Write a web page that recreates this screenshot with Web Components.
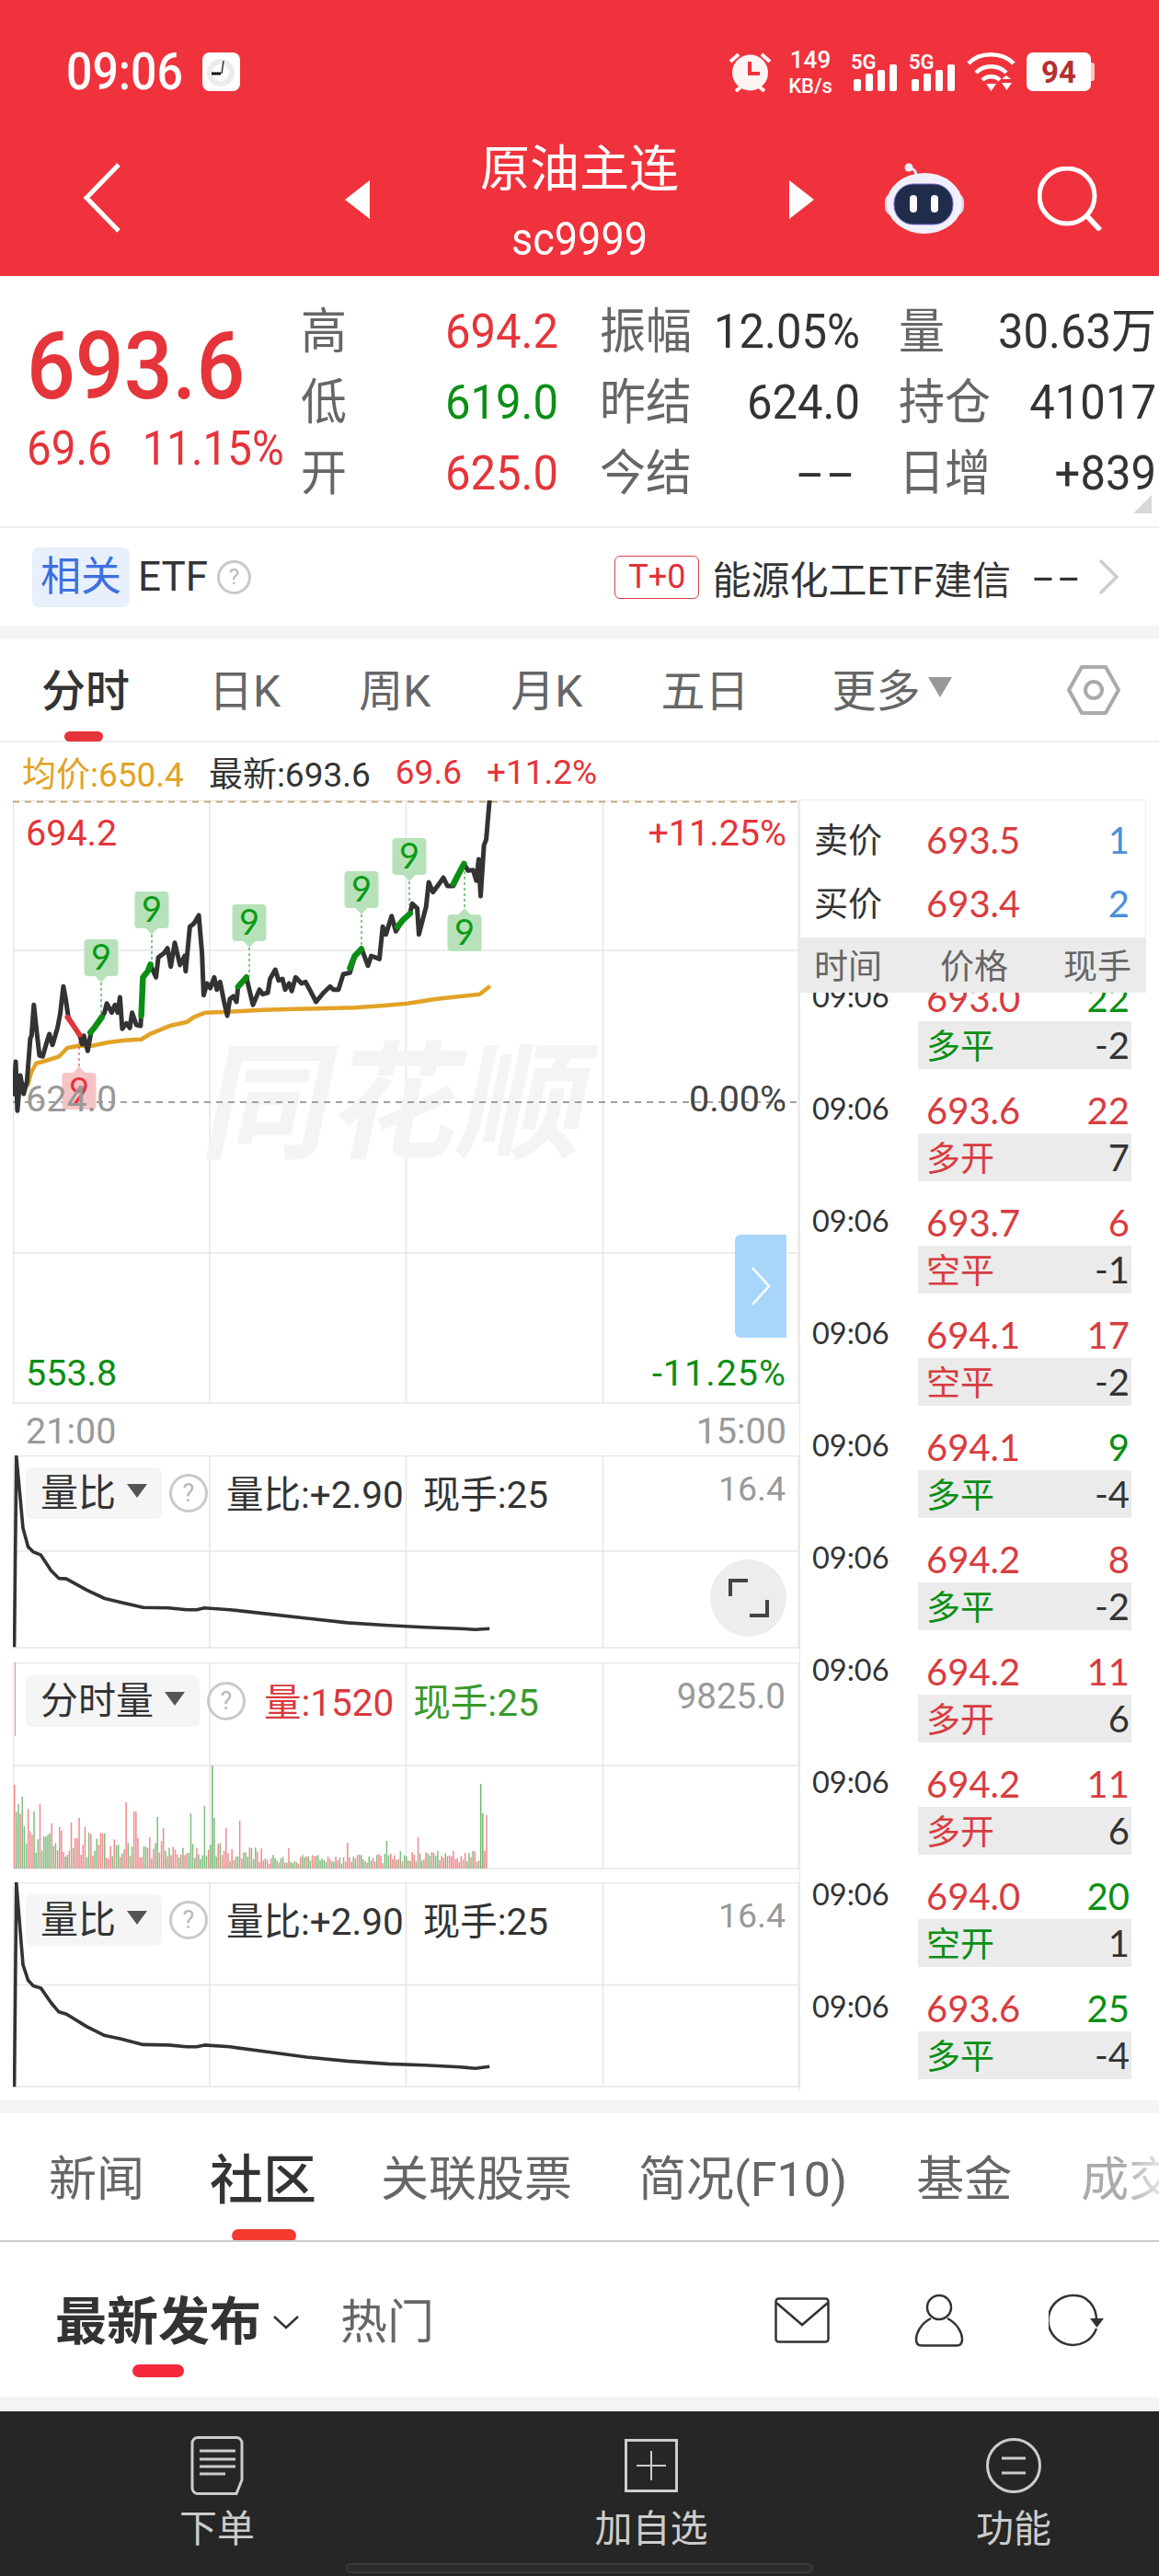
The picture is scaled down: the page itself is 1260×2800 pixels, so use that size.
<!DOCTYPE html>
<html lang="zh-CN"><head><meta charset="utf-8"><title>原油主连</title>
<style>
html,body{margin:0;padding:0;background:#fff}
body{width:1260px;height:2800px;overflow:hidden;font-family:Roboto,"Noto Sans CJK SC",sans-serif;color:#333}
</style></head><body>
<red-header></red-header>
<quote-panel></quote-panel>
<etf-row></etf-row>
<gray-sep h="14"></gray-sep>
<period-tabs></period-tabs>
<price-legend></price-legend>
<chart-area>
  <chart-column>
    <price-chart></price-chart>
    <time-axis></time-axis>
    <ratio-chart h="210" gap="0" variant="a"></ratio-chart>
    <volume-chart></volume-chart>
    <ratio-chart h="223" gap="14" variant="b"></ratio-chart>
  </chart-column>
  <trade-list>
    <trade-row p="693.0" q="22" qc="g" k="多平" kc="g" d="-2"></trade-row>
    <trade-row p="693.6" q="22" qc="r" k="多开" kc="r" d="7"></trade-row>
    <trade-row p="693.7" q="6" qc="r" k="空平" kc="r" d="-1"></trade-row>
    <trade-row p="694.1" q="17" qc="r" k="空平" kc="r" d="-2"></trade-row>
    <trade-row p="694.1" q="9" qc="g" k="多平" kc="g" d="-4"></trade-row>
    <trade-row p="694.2" q="8" qc="r" k="多平" kc="g" d="-2"></trade-row>
    <trade-row p="694.2" q="11" qc="r" k="多开" kc="r" d="6"></trade-row>
    <trade-row p="694.2" q="11" qc="r" k="多开" kc="r" d="6"></trade-row>
    <trade-row p="694.0" q="20" qc="g" k="空开" kc="g" d="1"></trade-row>
    <trade-row p="693.6" q="25" qc="g" k="多平" kc="g" d="-4"></trade-row>
  </trade-list>
</chart-area>
<gray-sep h="14"></gray-sep>
<news-tabs></news-tabs>
<feed-bar></feed-bar>
<gray-sep h="16"></gray-sep>
<bottom-nav></bottom-nav>
<script>
const RED='#e5343a',GREEN='#0a8f14',GRID='#e6e6e6';
const el=(name,css,render)=>customElements.define(name,class extends HTMLElement{
  connectedCallback(){ if(this.shadowRoot) return;
    const s=this.attachShadow({mode:'open'});
    s.innerHTML=`<style>${css}</style>`+render(this);}
});
const pts=(a,fx,fy)=>a.map(p=>fx(p[0]).toFixed(1)+','+fy(p[1]).toFixed(1)).join(' ');

el('gray-sep',':host{display:block;background:#f4f4f4}',h=>{h.style.height=h.getAttribute('h')+'px';return ''});

el('help-dot',`:host{display:inline-flex;align-items:center;justify-content:center;box-sizing:border-box;
  width:var(--s,42px);height:var(--s,42px);border:3px solid #c9c9c9;border-radius:50%;color:#b8b8b8;font-size:27px;line-height:1;flex:none}`,()=>'?');

el('red-header',`
:host{display:block;height:300px;background:#f0323c;color:#fff;overflow:hidden}
.st{height:156px;display:flex;align-items:center;padding:0 70px 0 72px;box-sizing:border-box}
.time{font-size:50px;font-weight:500;width:148px;line-height:1;transform:scaleY(1.1)}
.right{margin-left:auto;display:flex;align-items:center}
.speed{display:flex;flex-direction:column;align-items:center;width:52px;margin:0 18px 0 16px;line-height:1;font-weight:500}
.speed b{font-size:26px;font-weight:500;margin-bottom:5px}.speed i{font-style:normal;font-size:22px}
svg{display:block}
.bat{width:70px;height:42px;background:#fff;border-radius:7px;color:#b52f33;font-size:33px;font-weight:700;display:flex;align-items:center;justify-content:center;line-height:1}
.tip{width:4px;height:20px;background:#ffc5c8;border-radius:0 3px 3px 0}
.nav{height:120px;display:grid;grid-template-columns:1fr 510px 1fr;grid-template-rows:120px;align-items:center}
.l{padding-left:90px;margin-top:-2px}
.mid{display:flex;align-items:center;justify-content:space-between;height:120px}
.tt{display:flex;flex-direction:column;align-items:center;margin-top:10px;height:128px}
.t1{font-size:54px;line-height:60px;margin-top:-2px}.t2{font-size:45px;line-height:50px;margin-top:20px;transform:scaleY(1.12)}
.r{display:flex;justify-content:flex-end;align-items:center;padding-right:62px;gap:80px}
.tri{margin-top:2px}
`,()=>`
<div class="st"><span class="time">09:06</span>
<svg width="41" height="42" viewBox="0 0 41 42"><rect width="41" height="42" rx="8" fill="#fff"/><circle cx="20" cy="22" r="15" fill="#ececec"/><circle cx="20" cy="22" r="9" fill="#fff"/><path d="M10 23h10" stroke="#111" stroke-width="3"/><path d="M23 9l-2 14" stroke="#333" stroke-width="1.5"/></svg>
<div class="right">
<svg width="47" height="46" viewBox="0 0 47 46"><circle cx="23.5" cy="24" r="19.5" fill="#fff4f4"/><path d="M2 12l9-8M45 12l-9-8M8 44l6-5M39 44l-6-5" stroke="#fff4f4" stroke-width="4" fill="none"/><path d="M23 12v13h11" stroke="#f0323c" stroke-width="4" fill="none"/></svg>
<div class="speed"><b>149</b><i>KB/s</i></div>
<svg width="52" height="44" viewBox="0 0 52 44"><text x="0" y="19" font-size="22" font-weight="600" fill="#fff" font-family="Roboto">5G</text><g fill="#fff"><rect x="3" y="30" width="8" height="13" rx="2"/><rect x="16" y="24" width="8" height="19" rx="2"/><rect x="29" y="20" width="8" height="23" rx="2"/><rect x="42" y="14" width="8" height="29" rx="2"/></g></svg>
<svg width="52" height="44" viewBox="0 0 52 44" style="margin-left:11px"><text x="0" y="19" font-size="22" font-weight="600" fill="#fff" font-family="Roboto">5G</text><g fill="#fff"><rect x="3" y="30" width="8" height="13" rx="2"/><rect x="16" y="24" width="8" height="19" rx="2"/><rect x="29" y="20" width="8" height="23" rx="2"/><rect x="42" y="14" width="8" height="29" rx="2"/></g></svg>
<svg width="54" height="44" viewBox="0 0 54 44" style="margin-left:11px"><g fill="none" stroke="#fff" stroke-width="4.5"><path d="M2 13C14 0 38 0 51 13"/><path d="M10 23c9-9 24-9 33 0"/><path d="M17 31c5-5 14-5 19 0"/></g><path d="M21 35h11l-5.500 8z" fill="#fff"/><path d="M38 30l5-4 5 4zM38 34h11l-5.500 8z" fill="#fff"/></svg>
<div class="bat" style="margin-left:11px">94</div><div class="tip"></div>
</div></div>
<div class="nav">
<div class="l"><svg width="42" height="76" viewBox="0 0 42 76"><path d="M39 2L4 38l35 36" fill="none" stroke="#fff" stroke-width="5"/></svg></div>
<div class="mid">
<svg class="tri" width="28" height="42" viewBox="0 0 28 42"><path d="M27 0v42L0 21z" fill="#fff"/></svg>
<div class="tt"><div class="t1">原油主连</div><div class="t2">sc9999</div></div>
<svg class="tri" width="28" height="42" viewBox="0 0 28 42"><path d="M1 0v42l27-21z" fill="#fff"/></svg>
</div>
<div class="r">
<svg width="86" height="78" viewBox="0 0 86 78"><path d="M34 14c0-5-3-8-7-8" fill="none" stroke="#e8e6f6" stroke-width="3"/><circle cx="26" cy="5" r="4.500" fill="#eeeef8"/><rect x="0" y="32" width="86" height="26" rx="10" fill="#d8d6ee"/><ellipse cx="43" cy="44" rx="41" ry="33" fill="#f1f0fa"/><rect x="10" y="23" width="64" height="44" rx="21" fill="#1f2d4b" stroke="#7d6bd8" stroke-width="1"/><rect x="27" y="35" width="8" height="19" rx="4" fill="#fff"/><rect x="50" y="35" width="8" height="19" rx="4" fill="#fff"/></svg>
<svg width="70" height="70" viewBox="0 0 70 70"><circle cx="32" cy="32" r="30" fill="none" stroke="#fff" stroke-width="5"/><path d="M54 54l14 15" stroke="#fff" stroke-width="5.500"/></svg>
</div></div>`);

el('quote-panel',`
:host{display:flex;height:274px;box-sizing:border-box;border-bottom:2px solid #eee;position:relative;overflow:hidden}
.left{width:327px;flex:none;padding:50px 0 0 29px;box-sizing:border-box;color:${RED}}
.big{font-size:93px;line-height:98px;font-weight:500;transform:scaleY(1.1);transform-origin:left center}
.sub{font-size:47.500px;line-height:50px;margin-top:15px;display:flex;gap:33px;white-space:nowrap;transform:scaleY(1.08);transform-origin:left center}
.g{display:grid;grid-template-columns:60px 220px 145px 183px 142px 180px;grid-auto-rows:77px;padding-top:22px;align-items:center;font-size:49px}
.g>*{transform:scaleY(1.06)}
.lb{color:#666;font-size:50px;line-height:1;white-space:nowrap}
.lp{padding-left:45px}.lq{padding-left:42px}
.v{text-align:right;color:#333;white-space:nowrap;line-height:1}
.g .d{transform:scale(2,1.06);transform-origin:right center;letter-spacing:3px;padding-right:1px}
.r{color:${RED}}.gr{color:${GREEN}}
.corner{position:absolute;right:8px;bottom:14px}
`,()=>`
<div class="left"><div class="big">693.6</div><div class="sub"><span>69.6</span><span>11.15%</span></div></div>
<div class="g">
<span class="lb">高</span><span class="v r">694.2</span><span class="lb lp">振幅</span><span class="v">12.05%</span><span class="lb lq">量</span><span class="v">30.63万</span>
<span class="lb">低</span><span class="v gr">619.0</span><span class="lb lp">昨结</span><span class="v">624.0</span><span class="lb lq">持仓</span><span class="v">41017</span>
<span class="lb">开</span><span class="v r">625.0</span><span class="lb lp">今结</span><span class="v d">--</span><span class="lb lq">日增</span><span class="v">+839</span>
</div>
<svg class="corner" width="20" height="20" viewBox="0 0 20 20"><path d="M20 0v20H0z" fill="#d8d8d8"/></svg>`);

el('etf-row',`
:host{display:flex;align-items:center;height:106px;font-size:42px;color:#333;padding:0 43px 0 35px;box-sizing:border-box}
.tag{width:106px;height:65px;background:#e8f0fd;border-radius:7px;color:#3d6fe0;font-size:44px;display:flex;align-items:center;justify-content:center;line-height:1}
.etf{margin:0 10px 0 9px;font-size:44px}
help-dot{--s:37px;font-size:24px}
.r{margin-left:auto;display:flex;align-items:center}
.t0{box-sizing:border-box;width:92px;height:47px;border:1.5px solid #d9414a;border-radius:6px;color:#e0303a;font-size:36px;display:flex;align-items:center;justify-content:center;margin-right:14px}
.dash{margin-left:24px;width:48px;letter-spacing:3px;display:inline-block;transform:scaleX(1.9);transform-origin:left center}
svg{margin-left:22px}
`,()=>`<div class="tag">相关</div><span class="etf">ETF</span><help-dot></help-dot>
<div class="r"><div class="t0">T+0</div><span>能源化工ETF建信</span><span class="dash">--</span>
<svg width="24" height="40" viewBox="0 0 24 40"><path d="M3 2l18 18L3 38" fill="none" stroke="#ccc" stroke-width="3.500"/></svg></div>`);

el('period-tabs',`
:host{display:flex;align-items:center;height:113px;box-sizing:border-box;border-bottom:2px solid #eee;font-size:48px;color:#666;position:relative;padding-top:4px}
span{white-space:nowrap;line-height:1}
.a{margin-left:45px;color:#333;font-weight:500;position:relative}
.a::after{content:"";position:absolute;left:25px;width:42px;height:11px;top:67px;background:${RED};border-radius:6px}
.tri{width:0;height:0;border:13px solid transparent;border-top:22px solid #999;border-bottom:0;margin:-10px 0 0 9px}
svg{margin-left:125px;margin-top:-4px}
`,()=>`<span class="a">分时</span><span style="margin-left:86px">日K</span><span style="margin-left:85px">周K</span><span style="margin-left:87px">月K</span><span style="margin-left:85px">五日</span><span style="margin-left:90px">更多</span><i class="tri"></i>
<svg width="58" height="54" viewBox="0 0 58 54"><path d="M16 2h26l14 25-14 25H16L2 27z" fill="none" stroke="#aaa" stroke-width="4" stroke-linejoin="round"/><circle cx="29" cy="27" r="9" fill="none" stroke="#aaa" stroke-width="4"/></svg>`);

el('price-legend',`
:host{display:flex;align-items:center;height:62px;font-size:37px;padding-left:24px;white-space:nowrap;color:#333;box-sizing:border-box;padding-top:2px}
.o{color:#e2a225}.r{color:${RED}}
span{margin-right:27px}
`,()=>`<span class="o">均价:650.4</span><span>最新:693.6</span><span class="r">69.6</span><span class="r">+11.2%</span>`);

el('chart-area',':host{display:flex;height:1414px;overflow:hidden}',()=>'<slot></slot>');
el('chart-column',':host{display:block;width:855px;margin-left:14px;flex:none;padding-top:1px}',()=>'<slot></slot>');

const gridSvg=(w,h,ys)=>{
  const xs=[214,427.5,641.5];
  return `<line x1="0" y1="0.5" x2="${w}" y2="0.5"/><line x1="0" y1="${h-1}" x2="${w}" y2="${h-1}"/><line x1="0.5" y1="0" x2="0.5" y2="${h}"/><line x1="${w-1}" y1="0" x2="${w-1}" y2="${h}"/>`+
    xs.map(x=>`<line x1="${x}" y1="0" x2="${x}" y2="${h}"/>`).join('')+ys.map(y=>`<line x1="0" y1="${y}" x2="${w}" y2="${y}"/>`).join('');
};

el('price-chart',`
:host{display:block;position:relative;height:656px;width:855px;overflow:hidden}
svg{position:absolute;left:0;top:0;overflow:hidden}
.wm{position:absolute;left:212px;top:262px;font-size:138px;line-height:1;font-weight:700;color:#f4f4f4;transform:skewX(-12deg);white-space:nowrap;letter-spacing:1px}
.lb{position:absolute;font-size:39.500px;line-height:44px;white-space:nowrap}
.btn{position:absolute;left:785px;top:472px;width:56px;height:112px;background:#a8d6fb;border-radius:6px 0 0 6px;display:flex;align-items:center;justify-content:center}
.btn svg{position:static}
`,()=>{
 const zx=x=>x/2.8-14, zy=y=>860+y/3-871;
 const price=[[42,990],[48,885],[53,1045],[62,930],[72,990],[82,950],[92,810],[96,800],[103,700],[112,790],[120,865],[130,868],[140,830],[150,795],[160,830],[175,775],[183,730],[193,640],[200,680],[208,740],[225,770],[243,800],[250,828],[255,800],[267,850],[277,790],[290,770],[305,745],[318,725],[325,695],[340,725],[350,700],[358,725],[365,675],[372,778],[385,760],[395,775],[402,725],[415,765],[428,768],[435,610],[450,590],[458,570],[475,610],[482,545],[500,530],[510,515],[520,575],[532,497],[548,570],[562,540],[565,590],[578,445],[590,435],[605,408],[615,530],[620,668],[630,630],[640,645],[652,610],[660,650],[670,625],[682,690],[692,735],[700,680],[710,672],[720,690],[725,640],[750,610],[770,700],[790,650],[800,665],[815,660],[822,615],[838,585],[848,620],[860,615],[868,650],[880,630],[888,655],[900,610],[918,630],[930,625],[945,655],[962,690],[985,660],[1005,640],[1015,650],[1030,650],[1045,600],[1065,595],[1080,540],[1100,515],[1120,572],[1130,540],[1155,550],[1165,445],[1175,470],[1192,410],[1205,460],[1225,425],[1248,402],[1255,370],[1270,385],[1275,470],[1297,380],[1305,300],[1318,332],[1340,300],[1350,285],[1362,312],[1380,312],[1412,240],[1425,262],[1440,260],[1450,295],[1457,225],[1463,345],[1473,180],[1480,160],[1490,35]];
 const avg=[[85,960],[95,920],[110,890],[130,885],[180,868],[205,840],[240,833],[280,833],[330,822],[380,815],[430,812],[460,793],[520,767],[570,755],[590,740],[625,725],[700,722],[800,716],[900,713],[1000,711],[1080,709],[1160,703],[1240,695],[1330,680],[1460,665],[1488,642]];
 const greens=[[[275,790],[290,770],[310,740]],[[430,735],[435,610],[450,590],[458,568]],[[725,640],[750,610]],[[1065,580],[1080,540],[1100,518]],[[1210,445],[1225,425],[1248,402]],[[1380,305],[1412,240]]];
 const red=[[205,740],[225,770],[243,798]];
 const pl=(a,c,w)=>`<polyline points="${pts(a,zx,zy)}" fill="none" stroke="${c}" stroke-width="${w}" stroke-linejoin="round" stroke-linecap="round"/>`;
 const badge=(cx,top,to,up,c,f)=>{
   const X=cx-14,Y=top-871,b=Y+40;
   const box=up
    ?`<path d="M${X-18.5} ${Y+4}q0-4 4-4h8l6.500-7 6.500 7h8q4 0 4 4v32q0 4-4 4h-29q-4 0-4-4z" fill="${f}"/><line x1="${X}" y1="${to-871}" x2="${X}" y2="${Y-7}" stroke="${c}" stroke-dasharray="3 3" stroke-width="1.500" opacity=".7"/>`
    :`<path d="M${X-18.5} ${Y+4}q0-4 4-4h29q4 0 4 4v32q0 4-4 4h-8l-6.500 7-6.500-7h-8q-4 0-4-4z" fill="${f}"/><line x1="${X}" y1="${b+7}" x2="${X}" y2="${to-871}" stroke="${c}" stroke-dasharray="3 3" stroke-width="1.500" opacity=".7"/>`;
   return box+`<text x="${X}" y="${Y+33}" text-anchor="middle" font-size="38" font-family="Lato,Roboto" fill="${c}">9</text>`;
 };
 const gf='#b7e2b9',gc='#0a9a14';
 return `<svg width="855" height="656" viewBox="0 0 855 656"><g stroke="${GRID}" stroke-width="1.500">${gridSvg(855,656,[163,492])}</g></svg>
 <div class="wm">同花顺</div>
 <svg width="855" height="656" viewBox="0 0 855 656">
 <line x1="0" y1="1.500" x2="855" y2="1.500" stroke="#c8a97e" stroke-width="2" stroke-dasharray="7 6"/>
 <line x1="0" y1="328" x2="855" y2="328" stroke="#a0a0a0" stroke-width="2" stroke-dasharray="7 6"/>
 ${pl(avg,'#e2a225',4.5)}
 ${badge(86,1167,1127,true,'#e5343a','#f7c4c6')}
 ${pl(price,'#333',5)}
 ${greens.map(g=>pl(g,GREEN,6.5)).join('')}${pl(red,RED,5.5)}
 ${badge(110,1022,1102,false,gc,gf)}${badge(165,970,1050,false,gc,gf)}${badge(271,984,1062,false,gc,gf)}${badge(393,948,1032,false,gc,gf)}${badge(445,912,985,false,gc,gf)}${badge(505,995,948,true,gc,gf)}
 </svg>
 <span class="lb" style="left:14px;top:14px;color:${RED}">694.2</span>
 <span class="lb" style="right:14px;top:14px;color:${RED}">+11.25%</span>
 <span class="lb" style="left:14px;top:303px;color:#999">624.0</span>
 <span class="lb" style="right:14px;top:303px;color:#444">0.00%</span>
 <span class="lb" style="left:14px;top:601px;color:${GREEN}">553.8</span>
 <span class="lb" style="right:14px;top:601px;color:${GREEN};letter-spacing:1px">-11.25%</span>
 <div class="btn"><svg width="24" height="44" viewBox="0 0 24 44"><path d="M3 2l18 20L3 42" fill="none" stroke="#fff" stroke-width="2.500"/></svg></div>`;
});

el('time-axis',`:host{display:flex;justify-content:space-between;align-items:center;height:56px;padding:2px 14px 0 14px;color:#999;font-size:39.500px;box-sizing:border-box}`,()=>`<span>21:00</span><span>15:00</span>`);

const headCss=`
.bar{position:relative;display:flex;align-items:flex-start;padding:13px 14px 0 14px;white-space:nowrap;font-size:40.500px;line-height:56px;color:#333}
.box{height:56px;background:#f5f5f5;border-radius:7px;display:flex;align-items:center;padding:0 16px;font-size:41px;box-sizing:border-box}
.box i{width:0;height:0;border:11px solid transparent;border-top:15px solid #555;border-bottom:0;margin:-6px 0 0 12px}
help-dot{margin:7px 0 0 8px}
.val{margin-left:auto;font-size:38.500px;color:#999;line-height:46px;margin-right:1px}
.t1{margin-left:20px;margin-top:2px}.t2{margin-left:21px;margin-top:2px}
svg.bg{position:absolute;left:0;top:0}
`;
el('ratio-chart',`
:host{display:block;position:relative;width:855px;overflow:hidden}
${headCss}
.val{font-size:37.500px}
.fs{position:absolute;left:758px;top:113px;width:83px;height:84px;border-radius:50%;background:#ededed;display:flex;align-items:center;justify-content:center}
`,h=>{
 const H=+h.getAttribute('h'),gap=+h.getAttribute('gap');
 h.style.height=H+'px'; h.style.marginTop=gap+'px';
 const v=h.getAttribute('variant');
 const a=v==='a'
 ?[[28,515],[32,90],[45,250],[55,292],[65,303],[80,310],[100,345],[115,362],[130,363],[170,388],[205,407],[235,415],[280,427],[330,428],[365,432],[385,432],[400,428],[450,432],[530,442],[600,451],[680,461],[760,467],[830,471],[900,474],[930,476],[958,474]]
 :[[28,1497],[32,1043],[45,1225],[55,1260],[65,1272],[80,1277],[100,1310],[115,1330],[130,1335],[170,1363],[205,1383],[235,1390],[280,1403],[330,1404],[365,1408],[385,1408],[400,1404],[450,1408],[530,1420],[600,1431],[680,1440],[760,1446],[830,1449],[900,1453],[930,1456],[958,1452]];
 const top=v==='a'?1583:2048;
 const P=pts(a,x=>x/1.8-14,y=>1540+y/2.05-top);
 const mid=v==='a'?104:111.5;
 return `<svg class="bg" width="855" height="${H}"><g stroke="${GRID}" stroke-width="1.500">${gridSvg(855,H,[mid])}</g><polyline points="${P}" fill="none" stroke="#333" stroke-width="3.600" stroke-linejoin="round"/></svg>
 <div class="bar"><div class="box">量比<i></i></div><help-dot></help-dot><span class="t1">量比:+2.90</span><span class="t2">现手:25</span><span class="val">16.4</span></div>
 ${v==='a'?`<div class="fs"><svg width="44" height="44" viewBox="0 0 44 44"><path d="M2 20V3h19M42 24v17H23" fill="none" stroke="#444" stroke-width="4"/></svg></div>`:''}`;
});

el('volume-chart',`
:host{display:block;position:relative;width:855px;height:225px;margin-top:15px;overflow:hidden}
${headCss}
.bar{padding-top:14px}
.r{color:#d9383e}.g{color:#3a9a2a}
`,()=>{
 let seed=17;const rnd=()=>{seed=(seed*16807)%2147483647;return seed/2147483647};
 const env=x=>x<20?60:x<55?48:x<100?34:x<160?30:x<225?28:x<270?20:x<370?13:x<420?15:x<510?17:45;
 const spikes={2:91,5:70,10:78,22:62,28:70,40:38,62:50,72:55,78:45,122:72,132:62,157:56,162:44,193:60,207:68,216:112,219:55,230:44,246:52,270:22,300:22,363:28,405:30,440:34,509:92,511:60,514:58,516:46,518:50};
 let r='';const h0=224;
 for(let i=0;i<242;i++){const x=1+i*2.13;
   let hh=env(x)*(.35+.8*rnd());
   for(const k in spikes){if(Math.abs(+k-x)<1.07) hh=spikes[k];}
   const c=rnd()<.55?'#ef8a8f':'#7fbe7f';
   const cc=(Math.abs(x-216)<1.1||Math.abs(x-509)<1.1)?'#6fb56f':(x>510?'#ef8a8f':c);
   r+=`<rect x="${x.toFixed(1)}" y="${(h0-hh).toFixed(1)}" width="1.500" height="${hh.toFixed(1)}" fill="${cc}"/>`;
 }
 r+=`<line x1="2.500" y1="0" x2="2.500" y2="80" stroke="#ef8a8f" stroke-width="1"/>`;
 return `<svg class="bg" width="855" height="225"><g stroke="${GRID}" stroke-width="1.500">${gridSvg(855,225,[112])}</g>${r}</svg>
 <div class="bar"><div class="box">分时量<i></i></div><help-dot></help-dot><span class="t1 r">量:1520</span><span class="t2 g">现手:25</span><span class="val">9825.0</span></div>`;
});

el('trade-list',`
:host{display:block;width:391px;flex:none;box-sizing:border-box;border-left:1.5px solid #e8e8e8;height:1404px;overflow:hidden;font-family:Lato,"Noto Sans CJK SC",sans-serif}
.top{height:150px;box-sizing:border-box;border-top:1.5px solid #eee;border-right:1.5px solid #eee;width:376px;padding-top:8px}
.q{display:grid;grid-template-columns:122px 1fr auto;align-items:center;height:69px;padding:0 17px 0 15px;font-size:40px;line-height:1;color:#d83c40}
.q span:first-child{color:#333;font-size:37px}.q span:last-child{color:#4a90d9}
.hd{height:60px;width:376px;background:#ebebeb;display:grid;grid-template-columns:137px 1fr auto;align-items:center;padding:0 16px 0 15px;box-sizing:border-box;font-size:37px;color:#666;line-height:1;position:relative;z-index:1}
.list{height:1194px;overflow:hidden}
.in{margin-top:-29px}
`,()=>`<div class="top"><div class="q"><span>卖价</span><span>693.5</span><span>1</span></div><div class="q"><span>买价</span><span>693.4</span><span>2</span></div></div>
<div class="hd"><span>时间</span><span>价格</span><span>现手</span></div>
<div class="list"><div class="in"><slot></slot></div></div>`);

el('trade-row',`
:host{display:grid;grid-template-columns:115px 232px;grid-template-rows:60px 52px;height:122px;padding-left:13px;font-size:40px;line-height:1;color:#333}
.t{grid-row:1/3;font-size:32.500px;padding-top:17px;line-height:1}
.p{display:flex;justify-content:space-between;align-items:center;padding:10px 2px 0 9px;color:#d83c40}
.b{display:flex;justify-content:space-between;align-items:center;background:#ebebeb;padding:0 2px 0 9px}
.k{font-size:37px}
.r{color:#d83c40}.g{color:${GREEN}}
`,h=>{const a=n=>h.getAttribute(n);return `<div class="t">09:06</div>
<div class="p"><span>${a('p')}</span><span class="${a('qc')}">${a('q')}</span></div>
<div class="b"><span class="k ${a('kc')}">${a('k')}</span><span>${a('d')}</span></div>`});

el('news-tabs',`
:host{display:flex;align-items:center;height:140px;box-sizing:border-box;border-bottom:2px solid #ccc;color:#666;font-size:52px;white-space:nowrap;overflow:hidden;padding-top:8px}
span{line-height:1;flex:none}
.a{font-size:58px;color:#333;font-weight:500;position:relative}
.a::after{content:"";position:absolute;left:24px;top:82px;width:70px;height:14px;background:#f53a30;border-radius:7px}
.fade{-webkit-mask-image:linear-gradient(90deg,#000 45%,transparent 100%);mask-image:linear-gradient(90deg,#000 45%,transparent 100%);opacity:.55}
`,()=>`<span style="margin-left:53px">新闻</span><span class="a" style="margin-left:71px">社区</span><span style="margin-left:70px">关联股票</span><span style="margin-left:72px">简况(F10)</span><span style="margin-left:75px">基金</span><span class="fade" style="margin-left:75px">成交</span>`);

el('feed-bar',`
:host{display:flex;align-items:center;height:168px;box-sizing:border-box;white-space:nowrap;padding-top:6px}
.a{font-size:56px;font-weight:700;color:#333;margin-left:60px;position:relative;line-height:1}
.a::after{content:"";position:absolute;left:84px;top:74px;width:56px;height:14px;background:#f5283c;border-radius:7px}
.h{font-size:51px;color:#666;margin-left:44px;line-height:1}
.ch{margin-left:12px}
.ic{margin-left:auto;display:flex;align-items:center;padding-right:60px;gap:92px;margin-top:-4px}
`,()=>`<span class="a">最新发布</span><svg class="ch" width="30" height="16" viewBox="0 0 30 16"><path d="M2 2l13 12L28 2" fill="none" stroke="#333" stroke-width="2.500"/></svg><span class="h">热门</span>
<div class="ic">
<svg width="60" height="50" viewBox="0 0 60 50"><rect x="1.500" y="1.500" width="57" height="47" rx="3" fill="none" stroke="#333" stroke-width="2.500"/><path d="M2 6l28 24L58 6" fill="none" stroke="#333" stroke-width="2.500"/></svg>
<svg width="54" height="58" viewBox="0 0 54 58"><circle cx="27" cy="15" r="13" fill="none" stroke="#333" stroke-width="2.500"/><path d="M18 27C8 32 2 42 2 50c0 4 2 6.500 6 6.500h38c4 0 6-2.500 6-6.500 0-8-6-18-16-23" fill="none" stroke="#333" stroke-width="2.500"/></svg>
<svg width="60" height="58" viewBox="0 0 60 58"><path d="M52 29c0-15-10-27-24-27A27 27 0 1 0 52 38" fill="none" stroke="#333" stroke-width="2.500"/><path d="M45 27h15l-7.500 10z" fill="#333"/></svg>
</div>`);

el('bottom-nav',`
:host{display:block;height:179px;background:#262626;color:#ccc;overflow:hidden}
.g{display:grid;grid-template-columns:472px 472px 316px;height:165px}
.it{display:flex;flex-direction:column;align-items:center;padding-top:27px;box-sizing:border-box}
.ib{height:64px;display:flex;align-items:center}
.lb{font-size:41px;line-height:48px;margin-top:13px}
.home{width:508px;height:11px;margin:0 auto;box-sizing:border-box;border:2px solid #3a3a3a;border-radius:6px;background:#2c2c2c}
`,()=>`<div class="g">
<div class="it"><div class="ib"><svg width="58" height="64" viewBox="0 0 58 64"><path d="M8 1.500h42a6 6 0 0 1 6 6v40L50 62.500H8a6 6 0 0 1-6-6v-49a6 6 0 0 1 6-6z" fill="none" stroke="#ccc" stroke-width="3"/><path d="M10 16h39M10 25h39M10 33h39M10 41h28" stroke="#ccc" stroke-width="3"/></svg></div><div class="lb">下单</div></div>
<div class="it"><div class="ib"><svg width="58" height="58" viewBox="0 0 58 58"><rect x="1.500" y="1.500" width="55" height="55" fill="none" stroke="#ccc" stroke-width="3"/><path d="M29 13v32M13 29h32" stroke="#ccc" stroke-width="2"/></svg></div><div class="lb">加自选</div></div>
<div class="it"><div class="ib"><svg width="60" height="60" viewBox="0 0 60 60"><circle cx="30" cy="30" r="28.500" fill="none" stroke="#ccc" stroke-width="3"/><path d="M17 22h26M17 38h26" stroke="#ccc" stroke-width="3"/></svg></div><div class="lb">功能</div></div>
</div><div class="home"></div>`);
</script>
</body></html>
